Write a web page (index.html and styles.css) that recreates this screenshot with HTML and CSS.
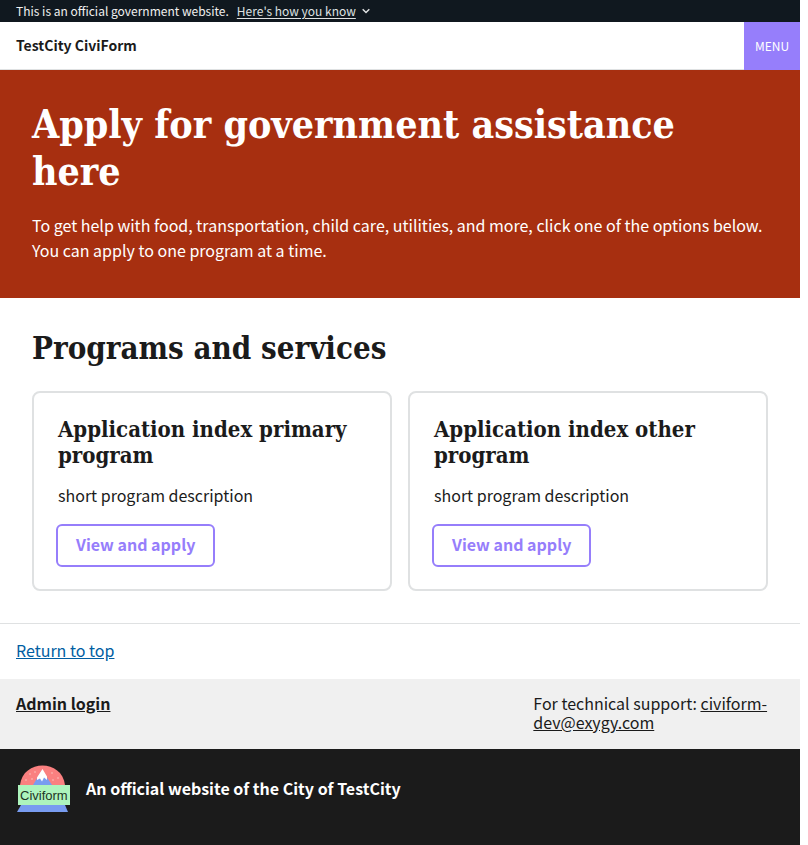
FILE: index.html
```html
<!DOCTYPE html>
<html lang="en">
<head>
<meta charset="utf-8">
<meta name="viewport" content="width=device-width, initial-scale=1">
<title>TestCity CiviForm</title>
<link rel="stylesheet" href="styles.css">
</head>
<body id="top">
<section class="banner">
  <p class="banner-text">This is an official government website.</p>
  <button class="banner-button" type="button"><span class="banner-label">Here's how you know</span>
    <svg class="banner-chevron" viewBox="0 0 8 6" aria-hidden="true"><path d="M.7 1.200 4 4.500 7.300 1.200" fill="none" stroke="currentColor" stroke-width="1.5"/></svg>
  </button>
</section>
<header class="header">
  <a class="site-title" href="#top">TestCity CiviForm</a>
  <button class="menu-button" type="button">MENU</button>
</header>
<main>
  <section class="hero">
    <h1>Apply for government assistance here</h1>
    <p>To get help with food, transportation, child care, utilities, and more, click one of the options below. You can apply to one program at a time.</p>
  </section>
  <section class="programs">
    <h2>Programs and services</h2>
    <ul class="cards">
      <li class="card">
        <h3>Application index primary program</h3>
        <p>short program description</p>
        <a class="apply" href="#primary">View and apply</a>
      </li>
      <li class="card">
        <h3>Application index other program</h3>
        <p>short program description</p>
        <a class="apply" href="#other">View and apply</a>
      </li>
    </ul>
  </section>
</main>
<footer class="footer">
  <div class="return"><a href="#top">Return to top</a></div>
  <div class="support">
    <a class="admin" href="#admin">Admin login</a>
    <p class="contact">For technical support: <a href="mailto:civiform-dev@exygy.com">civiform-dev@exygy.com</a></p>
  </div>
  <div class="identifier">
    <svg class="logo" viewBox="0 0 54 48" role="img" aria-label="Civiform logo">
      <path d="M4 20C7 -6 46 -6 49 20Z" fill="#fa8080"/>
      <g fill="#fbc5bd"><circle cx="14" cy="9" r=".8"/><circle cx="19" cy="7" r=".8"/><circle cx="36" cy="8" r=".8"/><circle cx="10" cy="15" r=".8"/><circle cx="16" cy="14" r=".8"/><circle cx="37" cy="15" r=".8"/><circle cx="42" cy="13" r=".8"/></g>
      <path d="M17 20 26 5 36 20Z" fill="#789cf0"/>
      <path d="M26.500 4 21 12.500V15L24 13.500 26 16.500 28 12.500 31 15V11.500Z" fill="#fff"/>
      <path d="M5 40H49L52 47H1Z" fill="#789cf0"/>
      <rect x="2" y="20" width="52" height="20" fill="#adf4bd"/>
      <text class="logo-text" x="4" y="35">Civiform</text>
    </svg>
    <p>An official website of the City of TestCity</p>
  </div>
</footer>
</body>
</html>
```

FILE: styles.css
```css
* { box-sizing: border-box; }
html { min-height: 100%; display: flex; flex-direction: column; background: #fff; }
body {
  flex: 1;
  display: flex;
  flex-direction: column;
  margin: 0 8px 0 0;
  color: #1b1b1b;
  font: 16px/25px "Noto Sans CJK SC", "Noto Sans", sans-serif;
}
h1, h2, h3, p, ul { margin: 0; }
button { border: 0; padding: 0; font: inherit; cursor: pointer; }
h1, h2, h3 { font-family: "DejaVu Serif Condensed", "DejaVu Serif", serif; font-weight: 700; }

.banner {
  display: flex;
  align-items: center;
  gap: 8px;
  height: 22px;
  padding: 0 16px;
  background: #10181f;
  color: #f0f0f0;
  font-size: 12px;
  line-height: 22px;
}
.banner-button { display: flex; align-items: center; gap: 6px; background: none; color: #dfe1e2; }
.banner-label { text-decoration: underline; text-underline-offset: 2px; }
.banner-chevron { width: 8px; height: 6px; }

.header {
  display: flex;
  align-items: stretch;
  justify-content: space-between;
  height: 48px;
}
.site-title {
  flex: 1;
  border-bottom: 1px solid #dfe1e2;
  padding-left: 16px;
  color: #1b1b1b;
  font-size: 14px;
  font-weight: 700;
  line-height: 46px;
  text-decoration: none;
}
.menu-button { min-width: 56px; padding: 0 8px 2px; background: #967efb; color: #fff; font-size: 12px; }

.hero { padding: 31px 32px 33px; background: #a72f10; color: #fff; }
.hero h1 { font-size: 39px; line-height: 47px; }
.hero p { margin-top: 18px; padding-bottom: 2px; }

.programs { padding: 32px; }
.programs h2 { font-size: 31px; line-height: 37px; }
.cards { display: grid; grid-template-columns: 1fr 1fr; gap: 16px; margin-top: 24px; padding: 0; list-style: none; }
.card { padding: 23px 24px 22px; border: 2px solid #dfe1e2; border-radius: 8px; }
.card h3 { font-size: 22px; line-height: 26px; }
.card p { margin-top: 15px; }
.apply {
  display: block;
  width: fit-content;
  margin: 16px -2px 0;
  padding: 9px 18px 11px;
  border: 2px solid #967efb;
  border-radius: 6px;
  color: #967efb;
  font-weight: 700;
  line-height: 19px;
  text-decoration: none;
}

.footer { flex: 1; display: flex; flex-direction: column; }
.return { padding: 14px 16px 16px; border-top: 1px solid #dfe1e2; }
.return a { color: #005ea2; }
.support {
  display: grid;
  grid-template-columns: 2fr 1fr;
  gap: 16px;
  padding: 15px 16px 17px;
  background: #f0f0f0;
  line-height: 19px;
}
.support a { color: #1b1b1b; }
.admin { font-weight: 700; }
.identifier { flex: 1; display: flex; align-items: flex-start; gap: 16px; padding: 16px; background: #1b1b1b; color: #fff; font-weight: 700; }
.identifier p { line-height: 46px; }
.logo { width: 54px; height: 48px; }
.logo-text { font: 400 13px "Liberation Sans", sans-serif; fill: #1d3324; }
```
